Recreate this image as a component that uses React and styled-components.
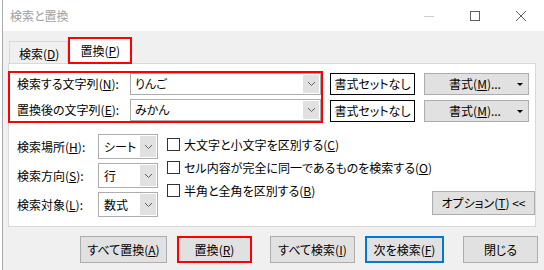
import React from "react";
import styled, { createGlobalStyle } from "styled-components";

const Global = createGlobalStyle`
  html, body { margin: 0; padding: 0; background: #fff; }
  body { width: 544px; height: 270px; overflow: hidden; }
  * { box-sizing: border-box; }
`;

const FONT = `"Noto Sans CJK JP", "Noto Sans", sans-serif`;

const Root = styled.div`
  width: 544px;
  height: 270px;
  padding-left: 2px;
  background: #fff;
  font-family: ${FONT};
  font-size: 12px;
  font-feature-settings: "palt" 1;
  color: #000;
  white-space: nowrap;
`;

const Win = styled.div`
  height: 100%;
  border-left: 1px solid #a9a9a9;
  background: #f0f0f0;
  display: flex;
  flex-direction: column;
`;

const TitleBar = styled.div`
  height: 31px;
  background: #fff;
  display: flex;
  align-items: center;
  padding-left: 7px;
`;

const Title = styled.div`
  flex: 1;
  color: #a0a0a0;
  font-size: 12px;
  line-height: 16px;
  padding-top: 1px;
`;

const CaptionBtn = styled.div`
  width: 46px;
  height: 31px;
  display: flex;
  align-items: center;
  justify-content: center;
`;

const TabStrip = styled.div`
  height: 32px;
  display: flex;
  align-items: flex-end;
  padding-left: 6px;
  position: relative;
  z-index: 1;
`;

const Tab = styled.div`
  height: ${(p) => (p.$active ? 27 : 22)}px;
  padding: ${(p) => (p.$active ? "1px 10px 0" : "2px 8px 0 9px")};
  display: flex;
  align-items: center;
  line-height: 16px;
  background: ${(p) => (p.$active ? "#fff" : "#f0f0f0")};
  border: ${(p) => (p.$active ? "2px solid #ff0000" : "1px solid #d9d9d9")};
  border-bottom: ${(p) => (p.$active ? "2px solid #ff0000" : "none")};
  margin-bottom: ${(p) => (p.$active ? "-1px" : "0")};
`;

const U = styled.span`
  text-decoration: underline;
  text-underline-offset: 1px;
`;

const Panel = styled.div`
  margin-left: 5px;
  width: 528px;
  height: 164px;
  background: #fff;
  border: 1px solid #d9d9d9;
  display: flex;
  flex-direction: column;
`;

const TopSection = styled.div`
  display: flex;
  margin-top: 7px;
  margin-left: -1px;
`;

const RedBox = styled.div`
  width: 315px;
  height: 52px;
  border: 2px solid #ff0000;
  padding-left: 7px;
  display: flex;
  flex-direction: column;
  gap: 4px;
`;

const FieldRow = styled.div`
  display: flex;
  align-items: center;
  height: 22px;
`;

const Label = styled.div`
  width: ${(p) => p.$w}px;
  line-height: 16px;
`;

const Combo = styled.div`
  width: ${(p) => p.$w}px;
  height: ${(p) => p.$h}px;
  border: 1px solid #adadad;
  background: #fff;
  display: flex;
  align-items: stretch;
`;

const ComboText = styled.div`
  flex: 1;
  padding-left: ${(p) => p.$pl || 4}px;
  display: flex;
  align-items: center;
  line-height: 16px;
  overflow: hidden;
`;

const ComboArrow = styled.div`
  width: 16px;
  margin: 1px;
  background: #e1e1e1;
  display: flex;
  align-items: center;
  justify-content: center;
`;

const BtnCol = styled.div`
  display: flex;
  flex-direction: column;
  gap: 5px;
  padding-top: 2px;
  margin-left: ${(p) => p.$ml}px;
`;

const OutlineBtn = styled.div`
  width: 85px;
  height: 22px;
  border: 1px solid #000;
  background: #fff;
  display: flex;
  align-items: center;
  justify-content: center;
  line-height: 16px;
`;

const GrayBtn = styled.div`
  width: ${(p) => p.$w}px;
  height: ${(p) => p.$h}px;
  background: #e1e1e1;
  border: ${(p) =>
    p.$tone === "red"
      ? "2px solid #ff0000"
      : p.$tone === "blue"
      ? "2px solid #0078d7"
      : "1px solid #adadad"};
  display: flex;
  align-items: center;
  justify-content: center;
  line-height: 16px;
`;

const FmtText = styled.div`
  flex: 1;
  text-align: center;
  padding-left: 8px;
`;

const Caret = styled.div`
  width: 0;
  height: 0;
  border-left: 3px solid transparent;
  border-right: 3px solid transparent;
  border-top: 3px solid #000;
  margin-right: 5px;
`;

const LowerSection = styled.div`
  display: flex;
  margin-top: 11px;
  padding-left: 8px;
  padding-right: 6px;
`;

const SelectCol = styled.div`
  display: flex;
  flex-direction: column;
  gap: 4px;
`;

const SelectRow = styled.div`
  display: flex;
  align-items: center;
  height: 25px;
`;

const CheckCol = styled.div`
  margin-left: 9px;
  margin-top: -1px;
  display: flex;
  flex-direction: column;
`;

const CheckRow = styled.label`
  display: flex;
  align-items: center;
  height: 23px;
  line-height: 16px;
`;

const Box = styled.span`
  width: 13px;
  height: 13px;
  border: 1px solid #333;
  background: #fff;
  margin-right: 4px;
  flex-shrink: 0;
`;

const OptionsWrap = styled.div`
  margin-left: auto;
  align-self: flex-end;
  margin-bottom: 2px;
`;

const BottomBar = styled.div`
  display: flex;
  margin-top: 9px;
  padding-left: 77px;
`;

const Gap = styled.div`
  width: ${(p) => p.$w}px;
  flex-shrink: 0;
`;

const Chevron = () => (
  <svg width="9" height="6" viewBox="0 0 9 6">
    <polyline points="1,1 4.5,4.5 8,1" fill="none" stroke="#606060" strokeWidth="1" />
  </svg>
);

const ComboBox = ({ w, h, text, pl }) => (
  <Combo $w={w} $h={h}>
    <ComboText $pl={pl}>{text}</ComboText>
    <ComboArrow>
      <Chevron />
    </ComboArrow>
  </Combo>
);

const Acc = ({ pre, k, post = "" }) => (
  <>
    {pre}(<U>{k}</U>){post}
  </>
);

export default function App() {
  return (
    <>
      <Global />
      <Root>
        <Win>
          <TitleBar>
            <Title>検索と置換</Title>
            <CaptionBtn>
              <svg width="10" height="10" viewBox="0 0 10 10">
                <line x1="0" y1="5.5" x2="10" y2="5.5" stroke="#cccccc" strokeWidth="1" />
              </svg>
            </CaptionBtn>
            <CaptionBtn>
              <svg width="10" height="10" viewBox="0 0 10 10">
                <rect x="0.5" y="0.5" width="9" height="9" fill="none" stroke="#5f5f5f" strokeWidth="1" />
              </svg>
            </CaptionBtn>
            <CaptionBtn>
              <svg width="10" height="10" viewBox="0 0 10 10">
                <path d="M0 0 L10 10 M10 0 L0 10" stroke="#5f5f5f" strokeWidth="1" />
              </svg>
            </CaptionBtn>
          </TitleBar>

          <TabStrip>
            <Tab>
              <Acc pre="検索" k="D" />
            </Tab>
            <Tab $active>
              <Acc pre="置換" k="P" />
            </Tab>
          </TabStrip>

          <Panel>
            <TopSection>
              <RedBox>
                <FieldRow>
                  <Label $w={113}>
                    <Acc pre="検索する文字列" k="N" post=":" />
                  </Label>
                  <ComboBox w={191} h={22} text="りんご" />
                </FieldRow>
                <FieldRow>
                  <Label $w={113}>
                    <Acc pre="置換後の文字列" k="E" post=":" />
                  </Label>
                  <ComboBox w={191} h={22} text="みかん" />
                </FieldRow>
              </RedBox>
              <BtnCol $ml={7}>
                <OutlineBtn>書式セットなし</OutlineBtn>
                <OutlineBtn>書式セットなし</OutlineBtn>
              </BtnCol>
              <BtnCol $ml={9}>
                <GrayBtn $w={105} $h={22}>
                  <FmtText>
                    <Acc pre="書式" k="M" post="..." />
                  </FmtText>
                  <Caret />
                </GrayBtn>
                <GrayBtn $w={105} $h={22}>
                  <FmtText>
                    <Acc pre="書式" k="M" post="..." />
                  </FmtText>
                  <Caret />
                </GrayBtn>
              </BtnCol>
            </TopSection>

            <LowerSection>
              <SelectCol>
                <SelectRow>
                  <Label $w={81}>
                    <Acc pre="検索場所" k="H" post=":" />
                  </Label>
                  <ComboBox w={60} h={25} text="シート" pl={5} />
                </SelectRow>
                <SelectRow>
                  <Label $w={81}>
                    <Acc pre="検索方向" k="S" post=":" />
                  </Label>
                  <ComboBox w={60} h={25} text="行" pl={5} />
                </SelectRow>
                <SelectRow>
                  <Label $w={81}>
                    <Acc pre="検索対象" k="L" post=":" />
                  </Label>
                  <ComboBox w={60} h={25} text="数式" pl={5} />
                </SelectRow>
              </SelectCol>
              <CheckCol>
                <CheckRow>
                  <Box />
                  <Acc pre="大文字と小文字を区別する" k="C" />
                </CheckRow>
                <CheckRow>
                  <Box />
                  <Acc pre="セル内容が完全に同一であるものを検索する" k="O" />
                </CheckRow>
                <CheckRow>
                  <Box />
                  <Acc pre="半角と全角を区別する" k="B" />
                </CheckRow>
              </CheckCol>
              <OptionsWrap>
                <GrayBtn $w={103} $h={24}>
                  <Acc pre="オプション" k="T" post=" <<" />
                </GrayBtn>
              </OptionsWrap>
            </LowerSection>
          </Panel>

          <BottomBar>
            <GrayBtn $w={87} $h={27}>
              <Acc pre="すべて置換" k="A" />
            </GrayBtn>
            <Gap $w={10} />
            <GrayBtn $w={75} $h={27} $tone="red">
              <Acc pre="置換" k="R" />
            </GrayBtn>
            <Gap $w={18} />
            <GrayBtn $w={85} $h={27}>
              <Acc pre="すべて検索" k="I" />
            </GrayBtn>
            <Gap $w={10} />
            <GrayBtn $w={79} $h={27} $tone="blue">
              <Acc pre="次を検索" k="F" />
            </GrayBtn>
            <Gap $w={19} />
            <GrayBtn $w={75} $h={27}>閉じる</GrayBtn>
          </BottomBar>
        </Win>
      </Root>
    </>
  );
}
